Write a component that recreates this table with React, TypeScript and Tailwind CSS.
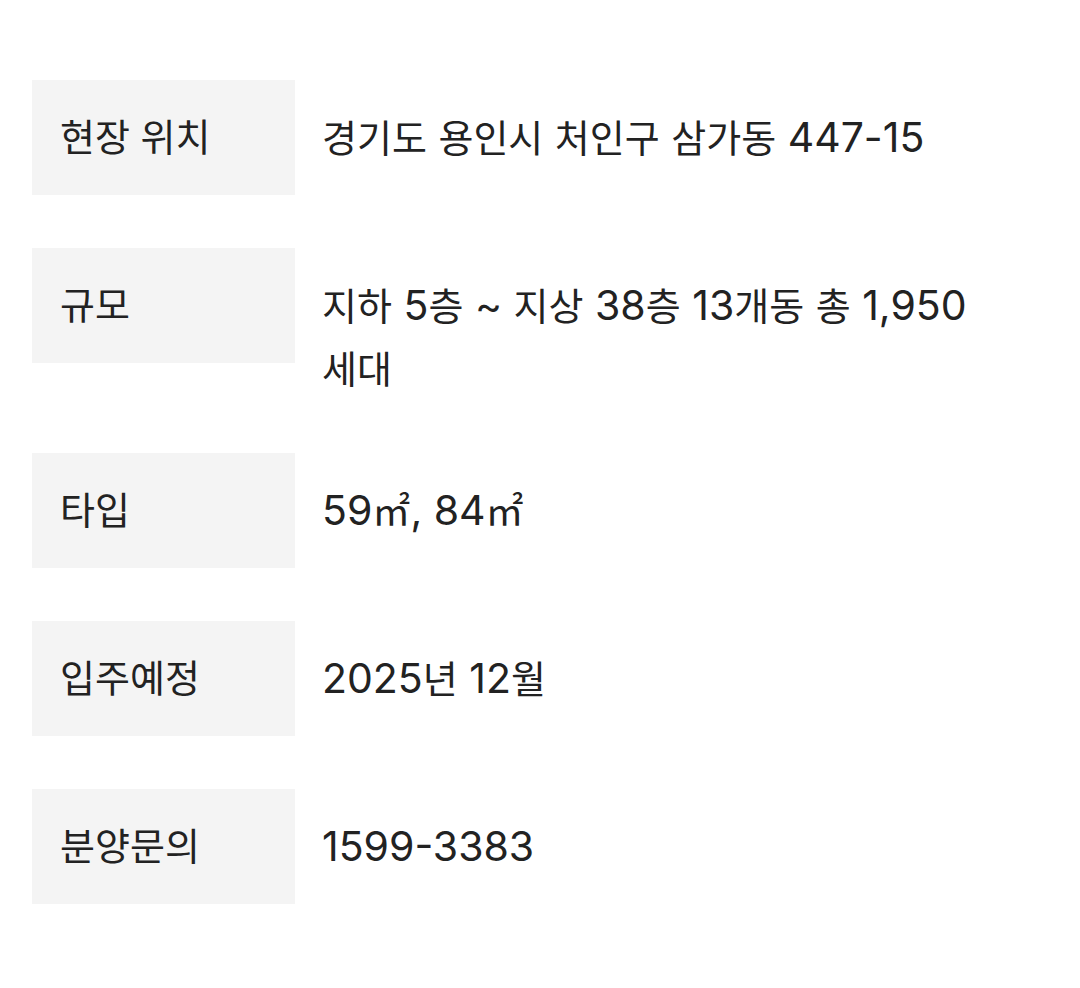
const ROWS = [
  { label: '현장 위치', value: '경기도 용인시 처인구 삼가동 447-15' },
  { label: '규모', value: '지하 5층 ~ 지상 38층 13개동 총 1,950 세대' },
  { label: '타입', value: '59㎡, 84㎡' },
  { label: '입주예정', value: '2025년 12월' },
  { label: '분양문의', value: '1599-3383' },
];

// hangul runs sit a bit smaller than the latin digits in the source font
function Mixed({ text }: { text: string }) {
  return (
    <>
      {text.split(/([\u3131-\uD7A3\u3380-\u33FF]+)/).map((part, i) =>
        i % 2 === 1 ? (
          <span key={i} className="text-[38px] leading-none">
            {part}
          </span>
        ) : (
          <span key={i}>{part}</span>
        ),
      )}
    </>
  );
}

export default function App() {
  return (
    <div
      className="min-h-[988px] w-[1080px] bg-white px-8 pt-20 text-[#222]"
      style={{ fontFamily: 'Inter, "Noto Sans CJK KR", sans-serif' }}
    >
      <dl className="flex flex-col gap-[53px]">
        {ROWS.map((row) => (
          <div key={row.label} className="flex items-start">
            <dt className="flex h-[115px] w-[263px] shrink-0 items-center bg-[#f4f4f4] pl-7 text-[38px] leading-[63px]">
              {row.label}
            </dt>
            <dd className="w-[720px] break-keep pl-[27px] pt-[26px] text-[41px] leading-[63px]">
              <Mixed text={row.value} />
            </dd>
          </div>
        ))}
      </dl>
    </div>
  );
}
